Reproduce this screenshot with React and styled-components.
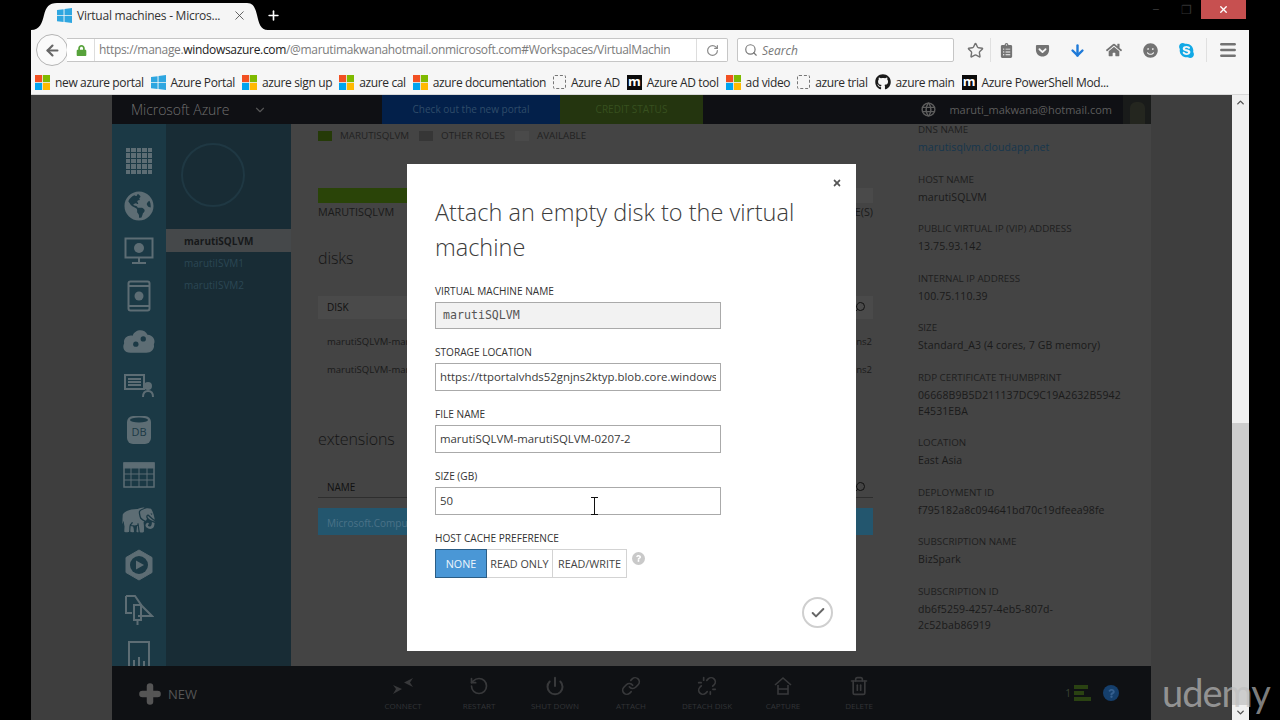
import styled, { createGlobalStyle } from "styled-components";
import {
  ArrowLeft,
  ArrowDown,
  ChevronDown,
  ChevronUp,
  Check,
  Link as LinkIcon,
  Menu,
  Plus,
  Power,
  RotateCcw,
  RotateCw,
  Search,
  Star,
  Trash2,
  Unlink,
  X,
} from "lucide-react";
import {
  FaGetPocket,
  FaGithub,
  FaGlobeAmericas,
  FaHome,
  FaLock,
  FaSkype,
  FaSmile,
  FaClipboardList,
  FaQuestion,
  FaTimes,
} from "react-icons/fa";
import { GiElephant } from "react-icons/gi";
import { TbWorld } from "react-icons/tb";

const FONT = '"Open Sans", "Noto Sans", sans-serif';
const RAIL = "#1b3945";

const GlobalStyle = createGlobalStyle`
  html, body {
    margin: 0;
    height: 720px;
    overflow: hidden;
    background: #000;
    font-family: ${FONT};
  }
  * {
    box-sizing: border-box;
  }
`;

const Flag = ({ size = 15 }) => (
  <svg width={size} height={size} viewBox="0 0 16 16">
    <path fill="#2ea6e0" d="M0 2.2 7 1.2V7.6H0zM8 1 16 0V7.6H8zM0 8.6H7V15L0 14zM8 8.6H16V16L8 15z" />
  </svg>
);

const MsLogo = () => (
  <svg width="15" height="15" viewBox="0 0 16 16">
    <rect width="7.6" height="7.6" fill="#f25022" />
    <rect x="8.4" width="7.6" height="7.6" fill="#7fba00" />
    <rect y="8.4" width="7.6" height="7.6" fill="#00a4ef" />
    <rect x="8.4" y="8.4" width="7.6" height="7.6" fill="#ffb900" />
  </svg>
);

const Window = styled.div`
  position: relative;
  width: 1218px;
  height: 720px;
  margin-left: 31px;
  display: flex;
  flex-direction: column;
`;

const TabStrip = styled.div`
  height: 30px;
  display: flex;
  align-items: flex-end;
  color: #fff;
`;

const Tab = styled.div`
  width: 237px;
  height: 27px;
  padding: 0 0 3px 26px;
  display: flex;
  align-items: center;
  background: #f5f5f5;
  color: #333;
  font-size: 12px;
  letter-spacing: -0.25px;
  clip-path: path("M0 27 C9 27 11 20 13 12 C15 4 18 0 26 0 L216 0 C222 0 224 4 226 12 C228 20 229 27 237 27 Z");
`;

const TabTitle = styled.span`
  margin-left: 5px;
  width: 155px;
  white-space: nowrap;
`;

const NewTab = styled.span`
  margin: 0 0 7px -2px;
  display: flex;
`;

const WindowButtons = styled.div`
  margin-left: auto;
  align-self: flex-start;
  display: flex;
  align-items: center;
  color: #333;
`;

const WindowGlyph = styled.span`
  width: 30px;
  text-align: center;
  font-size: 12px;
  line-height: 19px;
`;

const CloseButton = styled.span`
  width: 45px;
  height: 19px;
  margin-right: 3px;
  display: flex;
  align-items: center;
  justify-content: center;
  background: #c75050;
  color: #fff;
`;

const Toolbar = styled.div`
  height: 40px;
  padding-left: 5px;
  display: flex;
  align-items: center;
  background: #f6f6f6;
`;

const BackButton = styled.span`
  width: 32px;
  height: 32px;
  flex: none;
  border: 1px solid #b4b4b4;
  border-radius: 50%;
  background: #fafafa;
  color: #666;
  display: flex;
  align-items: center;
  justify-content: center;
`;

const UrlBar = styled.div`
  width: 661px;
  height: 24px;
  margin-left: -1px;
  padding-left: 9px;
  border: 1px solid #c6c6c6;
  border-left: 0;
  border-radius: 0 2px 2px 0;
  background: #fff;
  display: flex;
  align-items: center;
  color: #57a23b;
`;

const UrlText = styled.div`
  width: 576px;
  height: 22px;
  margin-left: 7px;
  padding-left: 4px;
  border-left: 1px solid #ddd;
  overflow: hidden;
  white-space: nowrap;
  font-size: 12px;
  line-height: 22px;
  letter-spacing: -0.32px;
  color: #7b7b7b;

  b {
    font-weight: 400;
    color: #222;
  }
`;

const Reload = styled.span`
  flex: 1;
  height: 22px;
  margin-left: 26px;
  border-left: 1px solid #ddd;
  display: flex;
  align-items: center;
  justify-content: center;
  color: #8a8a8a;
`;

const SearchBox = styled.div`
  width: 217px;
  height: 24px;
  margin-left: 9px;
  padding-left: 6px;
  border: 1px solid #c6c6c6;
  border-radius: 2px;
  background: #fff;
  display: flex;
  align-items: center;
  gap: 4px;
  color: #777;
  font-size: 12px;
  font-style: italic;
`;

const ToolIcons = styled.div`
  flex: 1;
  display: flex;
  align-items: center;
`;

const ToolIcon = styled.span`
  width: 20px;
  margin-left: ${(props) => props.$gap}px;
  display: flex;
  justify-content: center;
  color: ${(props) => props.$color || "#737373"};
`;

const ToolDivider = styled.span`
  width: 1px;
  height: 24px;
  margin-left: ${(props) => props.$gap}px;
  background: #e0e0e0;
`;

const Bookmarks = styled.div`
  height: 25px;
  padding-left: 4px;
  display: flex;
  align-items: center;
  gap: 7px;
  background: #f6f6f6;
  border-bottom: 1px solid #d8d8d8;
`;

const Bookmark = styled.div`
  display: flex;
  align-items: center;
  gap: 5px;
  white-space: nowrap;
  font-size: 12px;
  letter-spacing: -0.36px;
  color: #2a2a2a;
`;

const DashedIcon = styled.span`
  width: 13px;
  height: 14px;
  border: 1px dashed #777;
  border-radius: 2px;
`;

const MediumIcon = styled.span`
  width: 15px;
  height: 15px;
  background: #0b0b0b;
  color: #fff;
  font-size: 13px;
  font-weight: 700;
  line-height: 13px;
  text-align: center;
`;

const Page = styled.div`
  position: relative;
  flex: 1;
  min-height: 0;
  display: flex;
`;

const Viewport = styled.div`
  flex: 1;
  padding-left: 81px;
  background: #3e3e3e;
`;

const Portal = styled.div`
  width: 1039px;
  height: 625px;
  display: grid;
  grid-template-rows: 29px 1fr 54px;
`;

const Header = styled.header`
  display: flex;
  align-items: center;
  background: #0f1014;
  color: #666;
`;

const Brand = styled.div`
  width: 119px;
  margin-left: 19px;
  font-size: 14px;
  font-weight: 300;
  letter-spacing: -0.05px;
  color: #6f6f6f;
  white-space: nowrap;
`;

const BrandChevron = styled.span`
  width: 132px;
  display: flex;
  padding-left: 3px;
  color: #555;
`;

const Banner = styled.div`
  width: ${(props) => props.$width}px;
  height: 29px;
  background: ${(props) => props.$bg};
  color: ${(props) => props.$fg};
  font-size: 10px;
  line-height: 29px;
  text-align: center;
  white-space: nowrap;
`;

const HeaderUser = styled.div`
  margin-left: auto;
  height: 100%;
  display: flex;
  align-items: center;
  font-size: 11px;
  color: #5d5d5d;
`;

const UserEmail = styled.span`
  margin-left: 12px;
`;

const Avatar = styled.span`
  width: 28px;
  height: 100%;
  margin-left: 11px;
  background: #191b1a;
  display: flex;
  justify-content: center;
  align-items: flex-end;

  &::before {
    content: "";
    width: 15px;
    height: 22px;
    border-radius: 6px 6px 0 0;
    background: #24261f;
  }
`;

const Body = styled.div`
  min-height: 0;
  display: grid;
  grid-template-columns: 54px 125px 1fr;
  overflow: hidden;
`;

const IconRail = styled.nav`
  padding-top: 24px;
  display: flex;
  flex-direction: column;
  align-items: center;
  gap: 18.9px;
  background: ${RAIL};
  color: #5d6d74;
`;

const RailIcon = styled.span`
  height: 26px;
  display: flex;
  align-items: center;
  justify-content: center;
`;

const GridGlyph = styled.span`
  width: 26px;
  height: 26px;
  display: grid;
  grid-template-columns: repeat(5, 1fr);
  gap: 1px;

  i {
    background: #5d6d74;
  }
`;

const SideNav = styled.div`
  background: #182c35;
  font-size: 10px;
`;

const GhostCircle = styled.div`
  width: 64px;
  height: 64px;
  margin: 19px 0 22px 15px;
  border: 2px solid #1f3843;
  border-radius: 50%;
`;

const NavItem = styled.div`
  height: 23px;
  padding-left: 18px;
  line-height: ${(props) => (props.$active ? "25px" : "23px")};
  background: ${(props) => (props.$active ? "#45484a" : "transparent")};
  color: ${(props) => (props.$active ? "#17191a" : "#2b4754")};
  font-weight: ${(props) => (props.$active ? 700 : 400)};
  margin-bottom: ${(props) => (props.$active ? "0" : "-1px")};
`;

const Pane = styled.div`
  min-width: 0;
  display: grid;
  grid-template-columns: 609px 1fr;
  background: #444;
`;

const Main = styled.main`
  padding: 5px 27px 0;
  color: #262626;
`;

const Legend = styled.div`
  height: 14px;
  display: flex;
  align-items: center;
  font-size: 9.8px;
  line-height: 14px;
  white-space: nowrap;
  color: #222;
`;

const Swatch = styled.span`
  width: 14px;
  height: 10px;
  margin-right: 8px;
  background: ${(props) => props.$color};
`;

const LegendLabel = styled.span`
  margin-right: 10px;
`;

const UsageBar = styled.div`
  height: 15px;
  margin-top: 45px;
  background: #4a4a4a;
`;

const UsageFill = styled.div`
  height: 100%;
  background: #2a4408;
`;

const BarCaption = styled.div`
  margin-top: 2px;
  display: flex;
  justify-content: space-between;
  font-size: 10.8px;
  line-height: 14px;
  color: #1a1a1a;
`;

const SectionTitle = styled.h2`
  margin: ${(props) => props.$top}px 0 0;
  font-size: 16px;
  font-weight: 300;
  line-height: 24px;
  letter-spacing: -0.1px;
  color: #151515;
`;

const TableHead = styled.div`
  height: 23px;
  margin-top: 26px;
  padding: 0 7px 1px 9px;
  display: flex;
  align-items: center;
  justify-content: space-between;
  background: #4a4a4a;
  font-size: 10px;
  color: #111;

  svg {
    transform: scaleX(-1);
  }
`;

const DiskRow = styled.div`
  height: 28px;
  padding: 0 1px 0 9px;
  display: flex;
  align-items: center;
  justify-content: space-between;
  font-size: 9.5px;
  color: #1a1a1a;

  ${TableHead} + & {
    margin-top: 8px;
  }
`;

const NameHead = styled(TableHead)`
  height: 22px;
  margin-top: 25px;
  padding-top: 1px;
  background: none;
  border-bottom: 1px solid #2e2e2e;
`;

const SelectedRow = styled.div`
  height: 27px;
  margin-top: 10px;
  padding-left: 9px;
  background: #23566e;
  color: #4a7288;
  font-size: 10px;
  line-height: 30px;
`;

const Details = styled.aside`
  padding: 0 0 0 18px;
  margin-top: -1px;
`;

const Detail = styled.div`
  margin-bottom: 17.5px;
`;

const DetailLabel = styled.div`
  margin-bottom: 3px;
  font-size: 9.8px;
  line-height: 13px;
  color: #1e1e1e;
  white-space: nowrap;
`;

const DetailValue = styled.div`
  font-size: 10.5px;
  line-height: 16px;
  letter-spacing: 0.1px;
  white-space: pre-line;
  color: ${(props) => (props.$link ? "#16364d" : "#1a1a1a")};
`;

const Footer = styled.footer`
  display: flex;
  align-items: center;
  background: #0f1114;
`;

const NewButton = styled.div`
  width: 253px;
  padding: 1px 0 0 25px;
  display: flex;
  align-items: center;
  gap: 5px;
  font-size: 13px;
  color: #555;
`;

const Command = styled.div`
  width: 76px;
  display: flex;
  flex-direction: column;
  align-items: center;
  gap: 5px;
  font-size: 8px;
  line-height: 10px;
  color: #323437;
  white-space: nowrap;

  svg {
    color: #38393b;
  }
`;

const FooterStatus = styled.div`
  margin-left: auto;
  padding-right: 32px;
  display: flex;
  align-items: center;
  gap: 12px;
  font-size: 10px;
  color: #3c4534;
`;

const StatusBars = styled.span`
  display: flex;
  flex-direction: column;
  gap: 2px;
  margin-left: -9px;

  i {
    display: block;
    height: 4px;
    background: #2a4212;
  }
  i:nth-child(1) { width: 14px; }
  i:nth-child(2) { width: 10px; }
  i:nth-child(3) { width: 17px; }
`;

const HelpDot = styled.span`
  width: 16px;
  height: 16px;
  border-radius: 50%;
  background: #153f6c;
  color: #35608f;
  display: flex;
  align-items: center;
  justify-content: center;
`;

const Scrollbar = styled.div`
  width: 17px;
  display: flex;
  flex-direction: column;
  align-items: center;
  background: #f0f0f0;
  color: #505050;
`;

const ScrollArrow = styled.span`
  height: 15px;
  display: flex;
  align-items: center;
`;

const ScrollThumb = styled.div`
  width: 100%;
  height: 282px;
  margin-top: auto;
  background: #cdcdcd;
`;

const Overlay = styled.div`
  position: absolute;
  inset: 0 17px 0 0;
  display: grid;
  place-items: center;
`;

const Dialog = styled.section`
  position: relative;
  width: 449px;
  height: 487px;
  padding: 31px 28px 0;
  background: #fff;
`;

const DialogClose = styled.span`
  position: absolute;
  top: 14px;
  right: 14px;
  display: flex;
  color: #555;
`;

const DialogTitle = styled.h1`
  margin: 0 0 18.5px;
  font-size: 23.5px;
  font-weight: 300;
  line-height: 35px;
  color: #3c3c3c;
`;

const Field = styled.div`
  position: relative;
  width: 286px;
  margin-bottom: 16px;
`;

const FieldLabel = styled.label`
  display: block;
  margin-bottom: 4px;
  font-size: 10.1px;
  line-height: 14px;
  color: #333;
  white-space: nowrap;
`;

const Input = styled.input`
  display: block;
  width: 100%;
  height: ${(props) => (props.$mono ? "27px" : "28px")};
  padding: 0 ${(props) => (props.$mono ? "7px" : "4px")};
  border: 1px solid #aaa;
  border-radius: 0;
  outline: 0;
  background: ${(props) => (props.$mono ? "#f2f2f2" : "#fff")};
  color: ${(props) => (props.$mono ? "#555" : "#3a3a3a")};
  font-family: ${(props) => (props.$mono ? '"DejaVu Sans Mono", monospace' : FONT)};
  font-size: ${(props) => (props.$mono ? "11.6px" : "11.4px")};
`;

const TextCursor = styled.svg`
  position: absolute;
  right: 123px;
  bottom: 0;
`;

const ButtonGroup = styled.div`
  display: flex;
  align-items: flex-start;
`;

const CacheButton = styled.span`
  width: ${(props) => props.$width}px;
  height: 29px;
  border: 1px solid ${(props) => (props.$active ? "#2b5d85" : "#d3d3d3")};
  border-left-width: ${(props) => (props.$active ? "1px" : "0")};
  background: ${(props) => (props.$active ? "#4a97d6" : "#fff")};
  color: ${(props) => (props.$active ? "#eef6fc" : "#444")};
  font-size: 10.8px;
  line-height: 27px;
  text-align: center;
  white-space: nowrap;
`;

const HintDot = styled.span`
  width: 13px;
  height: 13px;
  margin: 3px 0 0 5px;
  border-radius: 50%;
  background: #c9c9c9;
  color: #fff;
  display: flex;
  align-items: center;
  justify-content: center;
`;

const SubmitButton = styled.span`
  position: absolute;
  right: 23px;
  bottom: 23px;
  width: 31px;
  height: 31px;
  border: 2px solid #cfcfcf;
  border-radius: 50%;
  color: #666;
  display: flex;
  align-items: center;
  justify-content: center;
`;

const Watermark = styled.div`
  position: absolute;
  left: 1162px;
  top: 667px;
  font-family: Lato, "Open Sans", sans-serif;
  font-size: 38px;
  font-weight: 400;
  line-height: 50px;
  letter-spacing: -1px;
  color: rgba(190, 190, 190, 0.68);
  pointer-events: none;
`;

const bookmarks = [
  [<MsLogo />, "new azure portal"],
  [<Flag />, "Azure Portal"],
  [<MsLogo />, "azure sign up"],
  [<MsLogo />, "azure cal"],
  [<MsLogo />, "azure documentation"],
  [<DashedIcon />, "Azure AD"],
  [<MediumIcon>m</MediumIcon>, "Azure AD tool"],
  [<MsLogo />, "ad video"],
  [<DashedIcon />, "azure trial"],
  [<FaGithub size={16} color="#1a1a1a" />, "azure main"],
  [<MediumIcon>m</MediumIcon>, "Azure PowerShell Mod..."],
];

const details = [
  ["DNS NAME", "marutisqlvm.cloudapp.net", true],
  ["HOST NAME", "marutiSQLVM"],
  ["PUBLIC VIRTUAL IP (VIP) ADDRESS", "13.75.93.142"],
  ["INTERNAL IP ADDRESS", "100.75.110.39"],
  ["SIZE", "Standard_A3 (4 cores, 7 GB memory)"],
  ["RDP CERTIFICATE THUMBPRINT", "06668B9B5D211137DC9C19A2632B5942\nE4531EBA"],
  ["LOCATION", "East Asia"],
  ["DEPLOYMENT ID", "f795182a8c094641bd70c19dfeea98fe"],
  ["SUBSCRIPTION NAME", "BizSpark"],
  ["SUBSCRIPTION ID", "db6f5259-4257-4eb5-807d-\n2c52bab86919"],
];

const ConnectIcon = () => (
  <svg width="22" height="20" viewBox="0 0 22 20" fill="currentColor">
    <path d="M1 9 10 13 1 18 4 13zM21 2 12 6.5 21 11 18 6.5z" />
  </svg>
);

const CaptureIcon = () => (
  <svg width="20" height="20" viewBox="0 0 20 20" fill="none" stroke="currentColor" strokeWidth="1.6">
    <path d="M2 9 10 2l8 7M5 9v9h10V9M5 13h10" />
  </svg>
);

const commands = [
  [<ConnectIcon />, "CONNECT"],
  [<RotateCcw size={20} />, "RESTART"],
  [<Power size={20} strokeWidth={2.4} />, "SHUT DOWN"],
  [<LinkIcon size={20} />, "ATTACH"],
  [<Unlink size={20} />, "DETACH DISK"],
  [<CaptureIcon />, "CAPTURE"],
  [<Trash2 size={20} />, "DELETE"],
];

const MonitorIcon = () => (
  <svg width="30" height="28" viewBox="0 0 30 28" fill="none" stroke="currentColor" strokeWidth="2">
    <rect x="1.500" y="1.500" width="27" height="19" />
    <circle cx="15" cy="11" r="5" fill="currentColor" stroke="none" />
    <path d="M8 26h14M15 21v5" />
  </svg>
);

const PhoneIcon = () => (
  <svg width="24" height="32" viewBox="0 0 24 32" fill="none" stroke="currentColor" strokeWidth="2">
    <rect x="1.500" y="1.500" width="21" height="29" rx="2" />
    <path d="M2 6h20M2 26h20" />
    <circle cx="12" cy="16" r="4.500" fill="currentColor" stroke="none" />
  </svg>
);

const CloudIcon = () => (
  <svg width="34" height="28" viewBox="0 0 32 26" fill="currentColor">
    <path d="M8 24C2 24 0 19 2 15 1 10 6 7 10 8 12 2 21 1 24 7 29 7 32 12 30 16 31 21 27 24 23 24z" />
    <circle cx="13" cy="16" r="2.500" fill={RAIL} />
    <circle cx="20" cy="11" r="2.500" fill={RAIL} />
  </svg>
);

const ListIcon = () => (
  <svg width="30" height="26" viewBox="0 0 30 26" fill="none" stroke="currentColor" strokeWidth="2">
    <path d="M1 3h19v14H1zM4 7h13M4 10h13M4 13h13" />
    <circle cx="24" cy="14" r="3" fill="currentColor" />
    <path d="M19 25c0-4 2-6 5-6s5 2 5 6" />
  </svg>
);

const DbIcon = () => (
  <svg width="24" height="30" viewBox="0 0 24 30">
    <rect y="1" width="24" height="28" rx="6" fill="currentColor" />
    <ellipse cx="12" cy="5" rx="9" ry="2.500" fill={RAIL} />
    <text x="12" y="21" textAnchor="middle" fontSize="11" fontFamily="Open Sans" fill={RAIL}>DB</text>
  </svg>
);

const TableIcon = () => (
  <svg width="32" height="26" viewBox="0 0 32 26" fill="none" stroke="currentColor">
    <rect x="1" y="1" width="30" height="24" strokeWidth="1.500" />
    <rect x="1" y="1" width="30" height="5" fill="currentColor" />
    <path d="M1 12h30M1 18h30M8 6v19M16 6v19M24 6v19" />
  </svg>
);

const MediaIcon = () => (
  <svg width="30" height="32" viewBox="0 0 30 32" fill="none" stroke="currentColor">
    <path d="M15 1 28 8.500v15L15 31 2 23.500v-15z" fill="currentColor" />
    <circle cx="15" cy="16" r="9" fill={RAIL} stroke="none" />
    <path d="M12 11.500 20 16l-8 4.500z" fill="currentColor" stroke="none" />
  </svg>
);

const FunnelIcon = () => (
  <svg width="30" height="32" viewBox="0 0 30 32" fill="none" stroke="currentColor" strokeWidth="2">
    <path d="M2 2h9l7 10 10 10H14M2 2v17h6" />
    <path d="M10 11h7v15h-7zM13.500 26v5" />
  </svg>
);

const ChartIcon = () => (
  <svg width="22" height="28" viewBox="0 0 22 28" fill="none" stroke="currentColor" strokeWidth="2">
    <rect x="1" y="1" width="20" height="26" />
    <path d="M6 25v-6M11 25v-9M16 25v-5" />
  </svg>
);

const App = () => {
  return (
    <>
      <GlobalStyle />
      <Window>
        <TabStrip>
          <Tab>
            <Flag size={15} />
            <TabTitle>Virtual machines - Micros...</TabTitle>
            <X size={15} strokeWidth={1.3} color="#444" />
          </Tab>
          <NewTab>
            <Plus size={15} strokeWidth={2.6} />
          </NewTab>
          <WindowButtons>
            <WindowGlyph>‒</WindowGlyph>
            <WindowGlyph>❐</WindowGlyph>
            <CloseButton>
              <X size={11} strokeWidth={3} />
            </CloseButton>
          </WindowButtons>
        </TabStrip>

        <Toolbar>
          <BackButton>
            <ArrowLeft size={17} strokeWidth={3} />
          </BackButton>
          <UrlBar>
            <FaLock size={11} />
            <UrlText>
              https://manage.<b>windowsazure.com</b>/@marutimakwanahotmail.onmicrosoft.com#Workspaces/VirtualMachinesExtension
            </UrlText>
            <Reload>
              <RotateCw size={13} strokeWidth={2.2} />
            </Reload>
          </UrlBar>
          <SearchBox>
            <Search size={14} />
            Search
          </SearchBox>
          <ToolIcons>
            <ToolIcon $gap={11}><Star size={17} strokeWidth={2} /></ToolIcon>
            <ToolDivider $gap={5} />
            <ToolIcon $gap={5}><FaClipboardList size={15} /></ToolIcon>
            <ToolIcon $gap={16}><FaGetPocket size={15} /></ToolIcon>
            <ToolIcon $gap={15} $color="#1f7ad8"><ArrowDown size={17} strokeWidth={3.4} /></ToolIcon>
            <ToolIcon $gap={17}><FaHome size={16} /></ToolIcon>
            <ToolIcon $gap={16}><FaSmile size={15} /></ToolIcon>
            <ToolIcon $gap={16} $color="#12a9e6"><FaSkype size={17} /></ToolIcon>
            <ToolDivider $gap={10} />
            <ToolIcon $gap={11}><Menu size={20} strokeWidth={3} /></ToolIcon>
          </ToolIcons>
        </Toolbar>

        <Bookmarks>
          {bookmarks.map(([icon, label]) => (
            <Bookmark key={label}>
              {icon}
              {label}
            </Bookmark>
          ))}
        </Bookmarks>

        <Page>
          <Viewport>
            <Portal>
              <Header>
                <Brand>Microsoft Azure</Brand>
                <BrandChevron>
                  <ChevronDown size={14} />
                </BrandChevron>
                <Banner $width={178} $bg="#03204a" $fg="#2f4c69">Check out the new portal</Banner>
                <Banner $width={143} $bg="#24350f" $fg="#37501f">CREDIT STATUS</Banner>
                <HeaderUser>
                  <TbWorld size={17} />
                  <UserEmail>maruti_makwana@hotmail.com</UserEmail>
                  <Avatar />
                </HeaderUser>
              </Header>

              <Body>
                <IconRail>
                  <RailIcon>
                    <GridGlyph>
                      {Array.from({ length: 25 }, (_, i) => <i key={i} />)}
                    </GridGlyph>
                  </RailIcon>
                  <RailIcon><FaGlobeAmericas size={30} /></RailIcon>
                  <RailIcon><MonitorIcon /></RailIcon>
                  <RailIcon><PhoneIcon /></RailIcon>
                  <RailIcon><CloudIcon /></RailIcon>
                  <RailIcon><ListIcon /></RailIcon>
                  <RailIcon><DbIcon /></RailIcon>
                  <RailIcon><TableIcon /></RailIcon>
                  <RailIcon><GiElephant size={36} /></RailIcon>
                  <RailIcon><MediaIcon /></RailIcon>
                  <RailIcon><FunnelIcon /></RailIcon>
                  <RailIcon><ChartIcon /></RailIcon>
                </IconRail>

                <SideNav>
                  <GhostCircle />
                  <NavItem $active>marutiSQLVM</NavItem>
                  <NavItem>marutiISVM1</NavItem>
                  <NavItem>marutiISVM2</NavItem>
                </SideNav>

                <Pane>
                  <Main>
                    <Legend>
                      <Swatch $color="#253a08" />
                      <LegendLabel>MARUTISQLVM</LegendLabel>
                      <Swatch $color="#363636" />
                      <LegendLabel>OTHER ROLES</LegendLabel>
                      <Swatch $color="#4a4a4a" />
                      <LegendLabel>AVAILABLE</LegendLabel>
                    </Legend>
                    <UsageBar>
                      <UsageFill style={{ width: "16%" }} />
                    </UsageBar>
                    <BarCaption>
                      <span>MARUTISQLVM</span>
                      <span>CORE(S)</span>
                    </BarCaption>

                    <SectionTitle $top={27}>disks</SectionTitle>
                    <TableHead>
                      <span>DISK</span>
                      <Search size={12} />
                    </TableHead>
                    <DiskRow>
                      <span>marutiSQLVM-marutiSQLVM-0207-1</span>
                      <span>ttportalvhds52gnjns2</span>
                    </DiskRow>
                    <DiskRow>
                      <span>marutiSQLVM-marutiSQLVM-0207-2</span>
                      <span>ttportalvhds52gnjns2</span>
                    </DiskRow>

                    <SectionTitle $top={44}>extensions</SectionTitle>
                    <NameHead>
                      <span>NAME</span>
                      <Search size={12} />
                    </NameHead>
                    <SelectedRow>Microsoft.Compute</SelectedRow>
                  </Main>

                  <Details>
                    {details.map(([label, value, link]) => (
                      <Detail key={label}>
                        <DetailLabel>{label}</DetailLabel>
                        <DetailValue $link={link}>{value}</DetailValue>
                      </Detail>
                    ))}
                  </Details>
                </Pane>
              </Body>

              <Footer>
                <NewButton>
                  <Plus size={26} strokeWidth={6} />
                  NEW
                </NewButton>
                {commands.map(([icon, label]) => (
                  <Command key={label}>
                    {icon}
                    {label}
                  </Command>
                ))}
                <FooterStatus>
                  1
                  <StatusBars><i /><i /><i /></StatusBars>
                  <HelpDot><FaQuestion size={9} /></HelpDot>
                </FooterStatus>
              </Footer>
            </Portal>
          </Viewport>

          <Scrollbar>
            <ScrollArrow><ChevronUp size={11} strokeWidth={3} /></ScrollArrow>
            <ScrollThumb />
            <ScrollArrow><ChevronDown size={11} strokeWidth={3} /></ScrollArrow>
          </Scrollbar>

          <Overlay>
            <Dialog>
              <DialogClose><FaTimes size={10} /></DialogClose>
              <DialogTitle>Attach an empty disk to the virtual machine</DialogTitle>

              <Field>
                <FieldLabel>VIRTUAL MACHINE NAME</FieldLabel>
                <Input $mono readOnly value="marutiSQLVM" />
              </Field>
              <Field>
                <FieldLabel>STORAGE LOCATION</FieldLabel>
                <Input readOnly value="https://ttportalvhds52gnjns2ktyp.blob.core.windows.net/vhds/" />
              </Field>
              <Field>
                <FieldLabel>FILE NAME</FieldLabel>
                <Input readOnly value="marutiSQLVM-marutiSQLVM-0207-2" />
              </Field>
              <Field>
                <FieldLabel>SIZE (GB)</FieldLabel>
                <Input readOnly value="50" />
                <TextCursor width="7" height="18" viewBox="0 0 7 18" fill="none" stroke="#111">
                  <path d="M0 .5h7M0 17.500h7M3.500 0v18" />
                </TextCursor>
              </Field>
              <Field>
                <FieldLabel>HOST CACHE PREFERENCE</FieldLabel>
                <ButtonGroup>
                  <CacheButton $active $width={52}>NONE</CacheButton>
                  <CacheButton $width={66}>READ ONLY</CacheButton>
                  <CacheButton $width={74}>READ/WRITE</CacheButton>
                  <HintDot><FaQuestion size={7} /></HintDot>
                </ButtonGroup>
              </Field>

              <SubmitButton><Check size={16} strokeWidth={3} /></SubmitButton>
            </Dialog>
          </Overlay>
        </Page>
      </Window>
      <Watermark>udemy</Watermark>
    </>
  );
};

export default App;
